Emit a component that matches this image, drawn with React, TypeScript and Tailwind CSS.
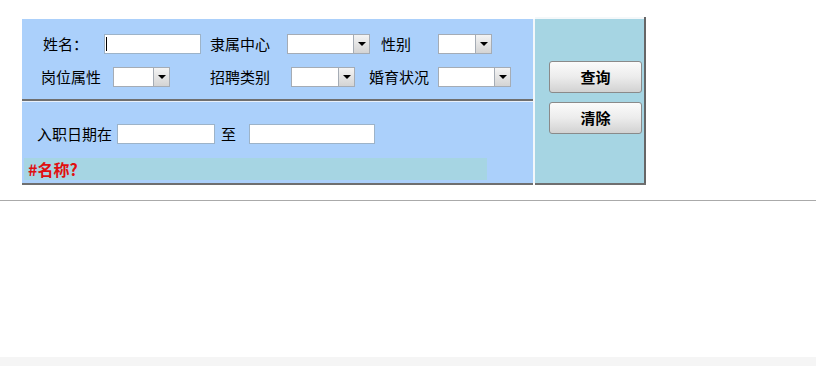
const font = { fontFamily: '"SimSun", "Noto Sans CJK SC", "Liberation Sans", sans-serif' };

function TextBox({ w, caret }: { w: number; caret?: boolean }) {
  return (
    <div
      className="relative h-[20px] bg-white border border-[#9db3c8]"
      style={{ width: w }}
    >
      {caret && <div className="absolute left-[1px] top-[2px] w-[1px] h-[14px] bg-black" />}
    </div>
  );
}

function Select({ w }: { w: number }) {
  return (
    <div className="flex h-[20px] bg-white border border-[#a5acb5]" style={{ width: w }}>
      <div className="flex-1" />
      <div className="w-[16px] h-full flex items-center justify-center border-l border-[#a5acb5] bg-gradient-to-b from-[#f4f4f4] to-[#d4d4d4]">
        <div className="w-0 h-0 border-l-[4px] border-r-[4px] border-t-[4px] border-l-transparent border-r-transparent border-t-black" />
      </div>
    </div>
  );
}

function Btn({ label }: { label: string }) {
  return (
    <div className="w-[93px] h-[32px] flex items-center justify-center rounded-[3px] border border-[#8a8a8a] bg-gradient-to-b from-[#fbfbfb] via-[#ececec] to-[#d2d2d2] text-[15px] font-bold text-black">
      {label}
    </div>
  );
}

export default function App() {
  return (
    <div className="w-[816px] h-[366px] bg-white relative text-[15px] text-black" style={font}>
      <div className="pt-[17px] pl-[22px] flex">
        {/* left panel */}
        <div className="w-[511px] mt-[2px] flex flex-col">
          <div className="h-[80px] bg-[#abd0fb] relative">
            <div className="absolute left-[21px] top-[15px] flex items-center h-[20px]">
              <span className="w-[61px]">姓名：</span>
              <TextBox w={97} caret />
              <span className="ml-[9px] w-[77px]">隶属中心</span>
              <Select w={83} />
              <span className="ml-[11px] w-[57px]">性别</span>
              <Select w={54} />
            </div>
            <div className="absolute left-[19px] top-[48px] flex items-center h-[20px]">
              <span className="w-[72px]">岗位属性</span>
              <Select w={57} />
              <span className="ml-[40px] w-[81px]">招聘类别</span>
              <Select w={64} />
              <span className="ml-[14px] w-[69px]">婚育状况</span>
              <Select w={73} />
            </div>
          </div>
          <div className="h-[2px] bg-[#6f6f6f]" />
          <div className="h-[1px] bg-[#e8f0fb]" />
          <div className="h-[81px] bg-[#abd0fb] relative">
            <div className="absolute left-[15px] top-[22px] flex items-center h-[20px]">
              <span className="w-[80px]">入职日期在</span>
              <TextBox w={98} />
              <span className="ml-[6px] w-[28px]">至</span>
              <TextBox w={126} />
            </div>
            <div className="absolute left-[2px] top-[56px] w-[463px] h-[22px] bg-[#a6d5e3] flex items-center pl-[4px] text-[16px] font-bold text-[#e01010]">
              #名称?
            </div>
          </div>
          <div className="h-[2px] bg-[#6f6f6f]" />
        </div>
        {/* separator */}
        <div className="w-[2px] mt-[2px] mb-[2px] bg-[#f2f7fb]" />
        {/* right panel */}
        <div className="flex flex-col">
          <div className="flex">
            <div className="w-[109px] h-[166px] bg-[#a6d5e3] border-t-2 border-[#f4f8fa] flex flex-col items-start pt-[42px] gap-[9px] pl-[14px]">
              <Btn label="查询" />
              <Btn label="清除" />
            </div>
            <div className="w-[2px] bg-[#666]" />
          </div>
          <div className="h-[2px] bg-[#6f6f6f]" />
        </div>
      </div>
      <div className="absolute left-0 top-[200px] w-full h-[1px] bg-[#aaaaaa]" />
      <div className="absolute left-0 top-[357px] w-full h-[9px] bg-[#f5f5f5]" />
    </div>
  );
}
